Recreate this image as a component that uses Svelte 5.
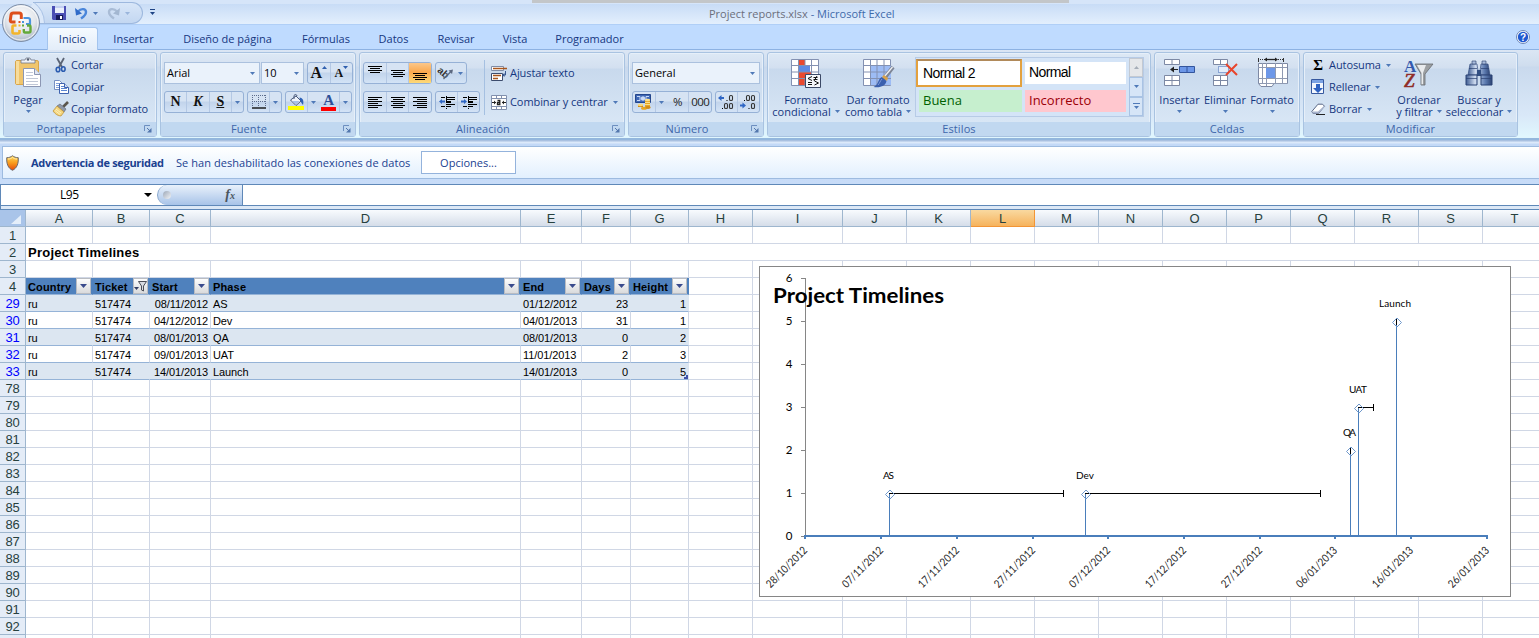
<script>
  const tabs = [
    ['Inicio', 51], ['Insertar', 71], ['Diseño de página', 117], ['Fórmulas', 80],
    ['Datos', 55], ['Revisar', 70], ['Vista', 48], ['Programador', 101]
  ];

  const columns = [
    ['A', 67], ['B', 57], ['C', 61], ['D', 310], ['E', 61], ['F', 49], ['G', 58], ['H', 64], ['I', 90],
    ['J', 64], ['K', 64], ['L', 64], ['M', 64], ['N', 64], ['O', 64], ['P', 64], ['Q', 64], ['R', 64],
    ['S', 64], ['T', 64]
  ];

  const fields = ['Country', 'Ticket', 'Start', 'Phase', 'End', 'Days', 'Height'];
  const records = {
    29: ['ru', '517474', '08/11/2012', 'AS', '01/12/2012', '23', '1'],
    30: ['ru', '517474', '04/12/2012', 'Dev', '04/01/2013', '31', '1'],
    31: ['ru', '517474', '08/01/2013', 'QA', '08/01/2013', '0', '2'],
    32: ['ru', '517474', '09/01/2013', 'UAT', '11/01/2013', '2', '3'],
    33: ['ru', '517474', '14/01/2013', 'Launch', '14/01/2013', '0', '5']
  };
  const rows = [1, 2, 3, 4, 29, 30, 31, 32, 33, ...Array.from({ length: 16 }, (_, i) => 78 + i)];
  const rightAligned = [2, 5, 6];

  const axisDates = ['28/10/2012', '07/11/2012', '17/11/2012', '27/11/2012', '07/12/2012',
    '17/12/2012', '27/12/2012', '06/01/2013', '16/01/2013', '26/01/2013'];
  const tickX = (i) => Math.round(46.4 + i * 75.72);
  const valueY = (v) => 270 - v * 43;
  const phases = [
    { name: 'AS', x: 130, v: 1, end: 304, w: 11, lx: 129.5 },
    { name: 'Dev', x: 326, v: 1, end: 561, w: 18, lx: 326 },
    { name: 'QA', x: 591, v: 2, end: 591, w: 13, lx: 590.5 },
    { name: 'UAT', x: 599, v: 3, end: 614, w: 18, lx: 599 },
    { name: 'Launch', x: 637, v: 5, end: 637, w: 32, lx: 636 }
  ];
</script>

{#snippet arrow()}
  <svg class="arrow" width="5" height="3" viewBox="0 0 5 3"><path d="M0 0h5L2.5 3z" fill="#4f79b8" /></svg>
{/snippet}

{#snippet lines(list, color = '#000')}
  {#each list as [x, y, w]}<rect {x} {y} width={w} height="1" fill={color} />{/each}
{/snippet}

{#snippet icon(name)}
  {#if name === 'save'}
    <svg width="14" height="14" viewBox="0 0 14 14"><path d="M0 0h14v14H1L0 13z" fill="#4a4eb4" /><path d="M3 0h9v7H3z" fill="#e9eefb" /><path d="M3 0h9v2H3z" fill="#c3cff2" /><path d="M4 9h7v5H4z" fill="#16195a" /><path d="M8 10h2v3H8z" fill="#fff" /></svg>
  {:else if name === 'undo'}
    <svg width="13" height="13" viewBox="0 0 13 13"><path d="M3 4.500C6 1 11 1.500 11 5c0 3-2 4.500-5 6.500" fill="none" stroke="#4a86da" stroke-width="2.400" /><path d="M0 1l1 7.500 6-2z" fill="#2f6ac8" /></svg>
  {:else if name === 'redo'}
    <svg width="13" height="13" viewBox="0 0 13 13"><path d="M10 4.500C7 1 2 1.500 2 5c0 3 2 4.500 5 6.500" fill="none" stroke="#a9bcd6" stroke-width="2.400" /><path d="M13 1l-1 7.500-6-2z" fill="#a3b7d1" /></svg>
  {:else if name === 'paste'}
    <svg width="28" height="32" viewBox="0 0 28 32"><rect x="1.500" y="3.500" width="23" height="24" rx="1.500" fill="#f0c56c" stroke="#d9a64b" /><path d="M2 4h3v23H2z" fill="#f7dc9c" /><path d="M7 6V3h4l1-2h4l1 2h4v3H7z" fill="#eef1f6" stroke="#717a8c" stroke-width=".8" /><circle cx="14" cy="2.500" r="1.200" fill="#555f72" /><path d="M9.500 11.500h11l6 6v12h-17z" fill="#fff" stroke="#8c97b3" /><path d="M20.500 11.500v6h6" fill="#dfe5f1" stroke="#8c97b3" /><path d="M12 15.500h7M12 18.500h7M12 21.500h12M12 24.500h12M12 27.500h12" stroke="#c0c7d6" /></svg>
  {:else if name === 'cut'}
    <svg width="12" height="15" viewBox="0 0 12 15"><path d="M2 0l5 9M9 0L4 9" stroke="#5b6475" stroke-width="1.800" /><ellipse cx="3" cy="11.500" rx="1.800" ry="2.300" fill="none" stroke="#2c5cb0" stroke-width="1.600" /><ellipse cx="8.300" cy="11" rx="1.800" ry="2.300" fill="none" stroke="#2c5cb0" stroke-width="1.600" /></svg>
  {:else if name === 'copy'}
    <svg width="15" height="14" viewBox="0 0 15 14"><path d="M.5.500h5l3 3v6h-8z" fill="#fff" stroke="#7690c4" /><path d="M2 3.500h3M2 5.500h4M2 7.500h4" stroke="#7fa0dc" /><path d="M5.500 3.500h5l4 4v6h-9z" fill="#fff" stroke="#3f62ae" /><path d="M7 6.500h3M7 8.500h6M7 10.500h6" stroke="#5c86d2" /><path d="M10.500 3.500v4h4" fill="#cfdcf4" stroke="#3f62ae" /></svg>
  {:else if name === 'brush'}
    <svg width="16" height="14" viewBox="0 0 16 14"><path d="M15 0l-5 5" stroke="#5a554c" stroke-width="2.600" /><path d="M7 2l6 5-2 3-7-6z" fill="#8f98a8" stroke="#5d6472" stroke-width=".6" /><path d="M4 4l7 6-3 4c-3 0-6-2-8-5z" fill="#f3d57e" stroke="#bb8b2a" stroke-width=".7" /><path d="M3 7l5 4M2 8.500l5 4" stroke="#fff4c8" stroke-width=".8" /></svg>
  {:else if name === 'border'}
    <svg width="14" height="14" viewBox="0 0 14 14"><path d="M0 .5h14M.5 0v12M13.500 0v12M6.500 0v12M0 6.500h14" stroke="#5c6c8c" stroke-dasharray="1 1" /><path d="M0 13h14" stroke="#111" stroke-width="1.400" /></svg>
  {:else if name === 'fill'}
    <svg width="16" height="16" viewBox="0 0 16 16"><path d="M2.500 6l5.500-4 5 5-5 4.500z" fill="#eef3fb" stroke="#49597a" /><path d="M4 7h8L8 10.500z" fill="#a8c0ea" /><path d="M6 5V1.500c1-1.500 3-1 3 .5" fill="none" stroke="#49597a" /><path d="M11.500 3.500c3.500.5 4.500 3 3.500 7.500-1-1-2-3-3-5z" fill="#2e62b8" /><path d="M0 12h16v4H0z" fill="#ff0" /></svg>
  {:else if name === 'wrap'}
    <svg width="16" height="15" viewBox="0 0 16 15"><path d="M.5.500h12v4H.5z" fill="#fff" stroke="#7f8ca6" /><path d="M2 2.500h14" stroke="#a8561d" stroke-width="1.500" /><path d="M.5 7.500h11v7H.5z" fill="#fff" stroke="#3c4c6d" /><path d="M2 9.500h8M2 12.500h5" stroke="#a8561d" stroke-width="1.500" /><path d="M14.500 5v4h-2" fill="none" stroke="#39588f" /><path d="M13.500 7v4L11 9z" fill="#39588f" /></svg>
  {:else if name === 'merge'}
    <svg width="16" height="15" viewBox="0 0 16 15"><path d="M.5.500h15v14H.5z" fill="#fff" stroke="#8190ae" /><path d="M0 3.500h16M0 11.500h16M5.500 0v3M10.500 0v3M5.500 12v3M10.500 12v3" stroke="#8190ae" /><path d="M1 7.500h4M11 7.500h4" stroke="#222" /><path d="M3 5.500L5 7.500 3 9.500zM13 5.500l-2 2 2 2z" fill="#222" /><path d="M6.500 5.500h2.300v4H6.500v-2h2.300" fill="none" stroke="#222" stroke-width="1.300" /></svg>
  {:else if name === 'orient'}
    <svg width="17" height="14" viewBox="0 0 17 14"><text x="1" y="8" transform="rotate(42 4 5)" font-family="Liberation Sans" font-size="10" font-weight="bold" fill="#333">ab</text><path d="M6.500 13L14 5.500" stroke="#5b6880" stroke-width="1.300" /><path d="M16 3.500l-4.500 1 3.500 3.500z" fill="#5b6880" /></svg>
  {:else if name === 'money'}
    <svg width="17" height="16" viewBox="0 0 17 16"><path d="M.5.500h15v8H.5z" fill="#3e67b5" stroke="#24468c" /><path d="M2 2.500h3v4H2M14 2.500h-3v4h3" fill="none" stroke="#c9daf7" /><circle cx="8" cy="4.500" r="2.200" fill="#c9daf7" /><path d="M10 6h5v7h-5z" fill="#e8a622" /><path d="M10 8.500h5M10 10.500h5" stroke="#fbe08d" /><ellipse cx="12.500" cy="6" rx="2.700" ry="1.300" fill="#fbe08d" /><path d="M3 11h5v2H3z" fill="#cf8a17" /><ellipse cx="5.500" cy="11" rx="2.700" ry="1.200" fill="#fbd978" /><ellipse cx="9" cy="14.300" rx="3" ry="1.500" fill="#e8a622" /><ellipse cx="13" cy="13.500" rx="2.700" ry="1.400" fill="#d18d18" /></svg>
  {:else if name === 'conditional'}
    <svg width="30" height="29" viewBox="0 0 30 29"><path d="M.5.500h27v26H.5z" fill="#fff" stroke="#8391b2" /><path d="M8 1h6v6H8zM8 13h12v7H8zM8 20h6v6H8z" fill="#e9492f" /><path d="M8 7h11v6H8z" fill="#5d8ae4" /><path d="M7.500 0v26M14 0v7M14 20v6M20.500 0v26M0 6.500h28M0 13h28M0 19.500h28" stroke="#8391b2" /><path d="M14.500 15.500h15v13h-15z" fill="#f5f7fb" stroke="#3b4966" /><path d="M21 17.500l-4 2 4 2M17 23.500h4M17 25.500h4M22.500 18.500h4M22.500 20.500h4M26 17l-3 5M23.500 22l4 2-4 2" fill="none" stroke="#111" /></svg>
  {:else if name === 'tableformat'}
    <svg width="31" height="29" viewBox="0 0 31 29"><path d="M.5.500h27v26H.5z" fill="#fff" stroke="#8391b2" /><path d="M8 7h20v19H8z" fill="#9dbcf5" /><path d="M7.500 0v26M14 0v26M21 0v26M0 6.500h28M0 13h28M0 19.500h28" stroke="#8391b2" /><path d="M30 8L20 21" stroke="#7d8596" stroke-width="4" /><path d="M29.500 8L21 18" stroke="#eef0f4" stroke-width="1.300" /><path d="M21 16l4 3-1 3-5-4z" fill="#d9a24a" /><path d="M18.500 18l5 4c-1 5-6 7-13 6 5-2 4-7 8-10z" fill="#3a5fae" /><path d="M19 20c-2 2-2 4-4 6" fill="none" stroke="#7d9bdc" /></svg>
  {:else if name === 'insert'}
    <svg width="31" height="28" viewBox="0 0 31 28"><path d="M.5.500h15v5H.5zM8 .5v5M.5 16.500h15v10H.5zM8 16.500v10M.5 21.500h15" fill="#fff" stroke="#7d89a4" /><path d="M15.500 7.500h15v6h-15z" fill="#6c97e8" stroke="#33559d" /><path d="M23 8v5" stroke="#33559d" /><path d="M8 10.500h6" stroke="#222" /><path d="M6 10.500l4-3v6z" fill="#222" /></svg>
  {:else if name === 'delete'}
    <svg width="25" height="28" viewBox="0 0 25 28"><path d="M.5.500h14v5H.5zM7.500 .5v5M.5 16.500h14v10H.5zM7.500 16.500v10M.5 21.500h14" fill="#fff" stroke="#7d89a4" /><path d="M5.500 7.500h10v6h-10z" fill="#e4edfa" stroke="#3c67b5" stroke-dasharray="1 1" /><path d="M13 5l11 11M24 5L13 16" stroke="#e8452c" stroke-width="2" /></svg>
  {:else if name === 'format'}
    <svg width="31" height="30" viewBox="0 0 31 30"><path d="M1 1.500h26" stroke="#333" stroke-dasharray="1 1" /><path d="M1.500 0v4M26.500 0v4" stroke="#333" /><path d="M9 1.500h10" stroke="#222" stroke-width="1.300" /><path d="M7 1.500l3-2v4zM21 1.500l-3-2v4z" fill="#222" /><path d="M1.500 5.500h29v20H17l-2 3H4l-2.500-3z" fill="#fff" stroke="#7d89a4" /><path d="M1 9.500h29M1 20.500h29M1 25.500h29M9.500 5v23M18.500 5v20M25.500 5v20M5.500 5v20" stroke="#8f9ab2" /><path d="M9 10h9v10H9z" fill="#6c97e8" /></svg>
  {:else if name === 'filldown'}
    <svg width="14" height="16" viewBox="0 0 14 16"><path d="M.5.500h12v14H.5z" fill="#f2f6fd" stroke="#36589f" /><path d="M1 1h11v3H1z" fill="#7ba2e3" /><path d="M5 5h4v4h3l-5 5-5-5h3z" fill="#2f62c1" /></svg>
  {:else if name === 'erase'}
    <svg width="15" height="12" viewBox="0 0 15 12"><path d="M.8 8.500L7 1.200h4.500l2 2L7.500 10.500H2z" fill="#fff" stroke="#5c6987" /><path d="M1 8.500h6l6.500-6v1.500L7.500 10.500H2z" fill="#a9b5ce" /><path d="M5 11.500h9" stroke="#222" /></svg>
  {:else if name === 'sort'}
    <svg width="30" height="29" viewBox="0 0 30 29"><text x="0" y="13" font-family="Liberation Serif" font-size="17" font-weight="bold" fill="#3359ad">A</text><text x="0" y="28" font-family="Liberation Serif" font-size="19" font-style="italic" fill="#8f2c27" stroke="#8f2c27" stroke-width=".6">Z</text><path d="M11 5h18l-8 10v11h-4V15z" fill="#9c9fa2" stroke="#66696f" stroke-width=".8" /><path d="M13 6h9l-3 8v11l-1.500.5V14z" fill="#e9ebed" /></svg>
  {:else if name === 'find'}
    <svg width="28" height="25" viewBox="0 0 28 25"><defs><linearGradient id="bino"><stop offset="0" stop-color="#3e5c92" /><stop offset=".35" stop-color="#cfdcf0" /><stop offset=".75" stop-color="#5d7bb0" /><stop offset="1" stop-color="#2c4373" /></linearGradient></defs><path d="M5 3h7l1 7-1 4H3zM16 3h7l2 11h-9l-1-4z" fill="url(#bino)" stroke="#3a5283" stroke-width=".7" /><path d="M7 0h4v3H7zM17 0h4v3h-4z" fill="#a9bcdc" stroke="#283d69" stroke-width=".6" /><path d="M12 9h4v6h-4z" fill="#324f82" /><path d="M1 14h11v10H1zM16 14h11v10H16z" fill="url(#bino)" stroke="#2b4274" /><path d="M1 17.500h11M16 17.500h11M4 7.500h8M16 7.500h8" stroke="#2a4070" stroke-opacity=".7" /></svg>
  {:else if name === 'shield'}
    <svg width="13" height="16" viewBox="0 0 13 16"><defs><linearGradient id="sh" x1="0" y1="0" x2="0" y2="1"><stop offset="0" stop-color="#ffd95a" /><stop offset=".5" stop-color="#f99b1d" /><stop offset="1" stop-color="#e4490e" /></linearGradient></defs><path d="M6.500.7C8 2 10 2.700 12.300 2.700 12.500 9 11 13 6.500 15.300 2 13 .5 9 .7 2.700 3 2.700 5 2 6.500.7z" fill="url(#sh)" stroke="#6b6a70" /><path d="M2 4c2 0 3-.5 4.500-1.500C8 3.500 9 4 11 4" stroke="#ffefb0" fill="none" /></svg>
  {:else if name === 'help'}
    <svg width="14" height="14" viewBox="0 0 14 14"><circle cx="7" cy="7" r="6.500" fill="#fff" stroke="#6c86b7" /><circle cx="7" cy="7" r="5.200" fill="#1f58d0" /><text x="7" y="10.500" text-anchor="middle" font-family="Liberation Sans" font-weight="bold" font-size="10" fill="#fff">?</text></svg>
  {:else if name === 'topalign'}
    <svg width="14" height="14" viewBox="0 0 14 14">{@render lines([[0, 0, 14], [2, 2, 10], [0, 4, 14], [2, 6, 10]])}</svg>
  {:else if name === 'midalign'}
    <svg width="14" height="14" viewBox="0 0 14 14">{@render lines([[0, 4, 14], [2, 6, 10], [0, 8, 14], [2, 10, 10]])}</svg>
  {:else if name === 'botalign'}
    <svg width="14" height="14" viewBox="0 0 14 14">{@render lines([[0, 7, 14], [2, 9, 10], [0, 11, 14], [2, 13, 10]])}</svg>
  {:else if name === 'left'}
    <svg width="14" height="11" viewBox="0 0 14 11">{@render lines([[0, 0, 14], [0, 2, 10], [0, 4, 14], [0, 6, 10], [0, 8, 14], [0, 10, 10]])}</svg>
  {:else if name === 'center'}
    <svg width="14" height="11" viewBox="0 0 14 11">{@render lines([[0, 0, 14], [2, 2, 10], [0, 4, 14], [2, 6, 10], [0, 8, 14], [2, 10, 10]])}</svg>
  {:else if name === 'right'}
    <svg width="14" height="11" viewBox="0 0 14 11">{@render lines([[0, 0, 14], [4, 2, 10], [0, 4, 14], [4, 6, 10], [0, 8, 14], [4, 10, 10]])}</svg>
  {:else if name === 'outdent' || name === 'indent'}
    <svg width="16" height="13" viewBox="0 0 16 13">
      {@render lines([[2, 1, 4], [7, 1, 9], [7, 3, 9], [7, 5, 5], [7, 6, 5], [7, 8, 9], [2, 10, 4], [7, 10, 5]])}
      <path d="M7.500 0v13" stroke="#000" stroke-dasharray="1 1" />
      {#if name === 'outdent'}<path d="M0 5.500L3 3v1.500h3v2H3V8z" fill="#2f66c4" />{:else}<path d="M6 5.500L3 3v1.500H0v2h3V8z" fill="#2f66c4" />{/if}
    </svg>
  {:else if name === 'moredec' || name === 'lessdec'}
    <svg width="17" height="15" viewBox="0 0 17 15">
      {#if name === 'moredec'}
        <path d="M0 3L3.500 0v2H6v2H3.500v2z" fill="#2f66c4" />
        <g fill="none" stroke="#333" stroke-width="1.100"><rect x="11.500" y=".5" width="3" height="5" rx="1.300" /><rect x="6.500" y="8.500" width="3" height="5" rx="1.300" /><rect x="11.500" y="8.500" width="3" height="5" rx="1.300" /></g><path d="M8.500 5h1v1h-1zM4 13h1v1H4z" />
      {:else}
        <path d="M6 10.500L2.500 7.500v2H0v2h2.500v2z" fill="#2f66c4" />
        <g fill="none" stroke="#333" stroke-width="1.100"><rect x="6.500" y=".5" width="3" height="5" rx="1.300" /><rect x="11.500" y=".5" width="3" height="5" rx="1.300" /><rect x="11.500" y="8.500" width="3" height="5" rx="1.300" /></g><path d="M4 5h1v1H4zM8.500 13h1v1h-1z" />
      {/if}
    </svg>
  {/if}
{/snippet}

{#snippet group(title, width, launcher, body)}
  <section class="group" style:width="{width}px">
    <div class="body">{@render body()}</div>
    <footer>
      <span>{title}</span>
      {#if launcher}
        <svg width="8" height="8" viewBox="0 0 8 8"><path d="M.5 6V.5H6" fill="none" stroke="#6d8fc0" /><path d="M3 3l3 3" stroke="#5377ad" /><path d="M7.500 3v4.500H3z" fill="#5377ad" /></svg>
      {/if}
    </footer>
  </section>
{/snippet}

{#snippet big(name, width, first, second)}
  <div class="big" style:width="{width}px">
    <div class="pic">{@render icon(name)}</div>
    <span>{first}</span>
    <span class="second">{second}{@render arrow()}</span>
  </div>
{/snippet}

{#snippet clipboard()}
  {@render big('paste', 48, 'Pegar', '')}
  <div class="stack">
    <div><i>{@render icon('cut')}</i>Cortar</div>
    <div><i>{@render icon('copy')}</i>Copiar</div>
    <div><i>{@render icon('brush')}</i>Copiar formato</div>
  </div>
{/snippet}

{#snippet font()}
  <div class="controls">
    <div class="line tight">
      <div class="combo" style:width="96px">Arial{@render arrow()}</div>
      <div class="combo" style:width="43px">10{@render arrow()}</div>
      <div class="btns aa" style:width="46px">
        <b class="serif grow">A<svg width="5" height="3" viewBox="0 0 5 3"><path d="M0 3h5L2.500 0z" fill="#2f5fae" /></svg></b>
        <b class="serif shrink">A<svg width="5" height="3" viewBox="0 0 5 3"><path d="M0 0h5L2.500 3z" fill="#2f5fae" /></svg></b>
      </div>
    </div>
    <div class="line">
      <div class="btns" style:width="80px">
        <b class="serif">N</b><b class="serif it">K</b><b class="serif un">S</b><em>{@render arrow()}</em>
      </div>
      <div class="btns" style:width="35px"><b>{@render icon('border')}</b><em>{@render arrow()}</em></div>
      <div class="btns" style:width="67px">
        <b>{@render icon('fill')}</b><em>{@render arrow()}</em>
        <b class="serif fontcolor"><span>A</span></b><em>{@render arrow()}</em>
      </div>
    </div>
  </div>
{/snippet}

{#snippet alignment()}
  <div class="controls">
    <div class="line">
      <div class="btns" style:width="69px">
        <b>{@render icon('topalign')}</b><b>{@render icon('midalign')}</b><b class="on">{@render icon('botalign')}</b>
      </div>
      <div class="btns" style:width="32px"><b class="plain">{@render icon('orient')}</b><em>{@render arrow()}</em></div>
    </div>
    <div class="line">
      <div class="btns" style:width="69px">
        <b>{@render icon('left')}</b><b>{@render icon('center')}</b><b>{@render icon('right')}</b>
      </div>
      <div class="btns" style:width="45px"><b>{@render icon('outdent')}</b><b>{@render icon('indent')}</b></div>
    </div>
  </div>
  <div class="wraps">
    <div><i>{@render icon('wrap')}</i>Ajustar texto</div>
    <div><i>{@render icon('merge')}</i>Combinar y centrar{@render arrow()}</div>
  </div>
{/snippet}

{#snippet number()}
  <div class="controls">
    <div class="line"><div class="combo" style:width="128px">General{@render arrow()}</div></div>
    <div class="line">
      <div class="btns" style:width="80px">
        <b>{@render icon('money')}</b><em>{@render arrow()}</em><b class="txt">%</b><b class="txt">000</b>
      </div>
      <div class="btns" style:width="45px"><b>{@render icon('moredec')}</b><b>{@render icon('lessdec')}</b></div>
    </div>
  </div>
{/snippet}

{#snippet styles()}
  <div class="inset"></div>
  {@render big('conditional', 72, 'Formato', 'condicional')}
  {@render big('tableformat', 72, 'Dar formato', 'como tabla')}
  <div class="gallery">
    <div class="swatches">
      <span class="sel">Normal 2</span><span class="arial">Normal</span>
      <span class="good">Buena</span><span class="bad">Incorrecto</span>
    </div>
    <div class="scroll">
      <i class="off"><svg width="5" height="3" viewBox="0 0 5 3"><path d="M0 3h5L2.500 0z" fill="#a5adb8" /></svg></i>
      <i>{@render arrow()}</i>
      <i><svg width="7" height="6" viewBox="0 0 7 6"><path d="M0 .5h7" stroke="#4f79b8" /><path d="M1 3h5L3.500 6z" fill="#4f79b8" /></svg></i>
    </div>
  </div>
{/snippet}

{#snippet cells()}
  {@render big('insert', 49, 'Insertar', '')}
  {@render big('delete', 42, 'Eliminar', '')}
  {@render big('format', 52, 'Formato', '')}
{/snippet}

{#snippet editing()}
  <div class="stack edit">
    <div><i class="sigma">Σ</i>Autosuma{@render arrow()}</div>
    <div><i>{@render icon('filldown')}</i>Rellenar{@render arrow()}</div>
    <div><i>{@render icon('erase')}</i>Borrar{@render arrow()}</div>
  </div>
  {@render big('sort', 52, 'Ordenar', 'y filtrar')}
  {@render big('find', 68, 'Buscar y', 'seleccionar')}
{/snippet}

<div class="app">
  <header class="titlebar">
    <div class="strip"></div>
    <div class="qat">
      {@render icon('save')}{@render icon('undo')}{@render arrow()}{@render icon('redo')}<span class="dim">{@render arrow()}</span>
    </div>
    <svg class="custom" width="7" height="7" viewBox="0 0 7 7"><path d="M1 .5h5" stroke="#1f4485" /><path d="M1 3h5L3.500 6z" fill="#1f4485" /></svg>
    <h1>Project reports.xlsx <span>- Microsoft Excel</span></h1>
  </header>

  <div class="orb">
    <svg width="46" height="40" viewBox="0 0 46 40">
      <defs><radialGradient id="orb" cx=".5" cy=".35" r=".65"><stop offset="0" stop-color="#fff" /><stop offset=".6" stop-color="#e3e6eb" /><stop offset="1" stop-color="#aab6c7" /></radialGradient></defs>
      <path d="M32 0Q43 7 44 20H20z" fill="#dbe8f9" />
      <path d="M33-.5Q43 7 43.500 20" fill="none" stroke="#a9c2e6" />
      <circle cx="20" cy="20" r="18.500" fill="url(#orb)" stroke="#7e8fa8" />
      <circle cx="20" cy="20" r="17" fill="none" stroke="#fff" stroke-opacity=".8" />
      <g fill="none">
        <path d="M14.500 19H11q-2 0-1.700-2l.7-5q.3-2 2.300-2h6q2 0 2 2v4" stroke="#dd4f1b" stroke-width="3" />
        <path d="M22.500 15h4.500q2 0 2 2v4h-4" stroke="#4a94de" stroke-width="2.200" />
        <path d="M15.500 22.500h-3q-1 0-1 1.500v5q0 1.500 1.500 1.500h4q1.500 0 1.500-1.500v-2" stroke="#f3b52b" stroke-width="2.600" />
        <path d="M26 22.500h2.500q1 0 1 1.500v4q0 1.500-1.500 1.500h-4q-1.200 0-1.200-1.500v-2" stroke="#63a93a" stroke-width="2.400" />
      </g>
      <path d="M17.500 18h2v2h-2z" fill="#dd4f1b" /><path d="M21 18h2v2h-2z" fill="#4a94de" /><path d="M17.500 21.500h2v2h-2z" fill="#f3b52b" /><path d="M21 21.500h2v2h-2z" fill="#63a93a" />
    </svg>
  </div>

  <nav>
    {#each tabs as [name, width], i}
      <span class:active={i === 0} style:width="{width}px">{name}</span>
    {/each}
    <div class="help">{@render icon('help')}</div>
  </nav>

  <div class="ribbon">
    {@render group('Portapapeles', 154, true, clipboard)}
    {@render group('Fuente', 196, true, font)}
    {@render group('Alineación', 266, true, alignment)}
    {@render group('Número', 136, true, number)}
    {@render group('Estilos', 384, false, styles)}
    {@render group('Celdas', 146, false, cells)}
    {@render group('Modificar', 215, false, editing)}
  </div>

  <div class="message">
    <div class="notice">
      {@render icon('shield')}
      <strong>Advertencia de seguridad</strong>
      <span>Se han deshabilitado las conexiones de datos</span>
      <button>Opciones...</button>
    </div>
  </div>

  <div class="formula">
    <div class="namebox"><span>L95</span><svg width="8" height="4" viewBox="0 0 8 4"><path d="M0 0h8L4 4z" /></svg></div>
    <div class="fxzone"><div class="fxpill"><i></i><span>f<small>x</small></span></div></div>
    <div class="input"></div>
  </div>

  <main>
    <div class="row head">
      <div class="corner"><svg width="10" height="9" viewBox="0 0 10 9"><path d="M10 0v9H0z" fill="#e4eefa" /></svg></div>
      {#each columns as [name, width]}
        <div class="colhead" class:current={name === 'L'} style:width="{width}px">{name}</div>
      {/each}
    </div>
    {#each rows as n}
      <div class="row" class:fields={n === 4} class:record={records[n]} class:band={records[n] && n % 2}>
        <div class="rowhead" class:filtered={records[n]}>{n}</div>
        {#if n === 2}
          <div class="cell title">Project Timelines</div>
        {:else}
          {#each columns as [, width], c}
            <div class="cell" class:tbl={c < 7} class:num={records[n] && rightAligned.includes(c)} style:width="{width}px">
              {#if n === 4 && c < 7}
                <span>{fields[c]}</span>
                <i class="drop">
                  {#if c === 1}
                    <svg width="13" height="11" viewBox="0 0 13 11"><path d="M0 6h5L2.500 9z" fill="#333e63" /><path d="M4.500.500h8L9.500 5v5l-2-1V5z" fill="#d8dbe1" stroke="#4c4f58" /></svg>
                  {:else}
                    <svg width="7" height="4" viewBox="0 0 7 4"><path d="M0 0h7L3.500 4z" fill="#3a4b8c" /></svg>
                  {/if}
                </i>
              {:else if records[n] && c < 7}
                {records[n][c]}
              {/if}
              {#if n === 33 && c === 6}<i class="handle"></i>{/if}
            </div>
          {/each}
        {/if}
      </div>
    {/each}

    <svg class="chart" width="752" height="331" viewBox="0 0 752 331">
      <rect x=".5" y=".5" width="751" height="330" fill="#fff" stroke="#868686" />
      <g shape-rendering="crispEdges">
        <path d="M46.500 12v258" stroke="#868686" />
        {#each [1, 2, 3, 4, 5, 6] as v}<path d="M42 {valueY(v) + 0.5}h4.500" stroke="#868686" />{/each}
        <path d="M42 270.500h5" stroke="#868686" />
      </g>
      {#each [0, 1, 2, 3, 4, 5, 6] as v}
        <text x="30" y={valueY(v) + 4} text-anchor="middle" font-size="11.500">{v}</text>
      {/each}
      <g shape-rendering="crispEdges">
        {#each phases as p}<path d="M{p.x + 0.5} {valueY(p.v)}V270" stroke="#4a7ebb" />{/each}
        <path d="M46 270h683" stroke="#4a7ebb" stroke-width="2" />
        {#each axisDates as _, i}<path d="M{tickX(i)} 269v4" stroke="#4a7ebb" stroke-width="2" />{/each}
      </g>
      {#each phases as p}
        <g shape-rendering="crispEdges">
          <path d="M{p.x} {valueY(p.v) + 0.5}H{p.end}" stroke="#000" />
          <path d="M{p.end + 0.5} {valueY(p.v) - 3}v7" stroke="#000" />
        </g>
        <path d="M{p.x + 1} {valueY(p.v) - 3}l4.500 4.500l-4.500 4.500l-4.500 -4.500z" fill="none" stroke="#6f98cb" />
        <text x={p.lx} y={valueY(p.v) - 14} text-anchor="middle" font-size="10" textLength={p.w}>{p.name}</text>
      {/each}
      {#each axisDates as d, i}
        <text class="date" transform="translate({tickX(i) + 3} 285) rotate(-45)" text-anchor="end" font-size="11" textLength="53" lengthAdjust="spacingAndGlyphs">{d}</text>
      {/each}
      <text x="14" y="37" font-size="20" font-weight="bold" textLength="171" lengthAdjust="spacingAndGlyphs">Project Timelines</text>
    </svg>
  </main>
</div>

<style>
  :global(body) { overflow: hidden; }
  .app { position: relative; width: 1539px; height: 638px; overflow: hidden; background: #bfd8fb; font: 11px/14px 'Open Sans', 'Noto Sans', sans-serif; color: #15377f; white-space: nowrap; }
  .app * { box-sizing: border-box; }
  svg { display: block; flex: none; overflow: visible; }
  i, em { font-style: normal; }

  .titlebar { position: relative; display: flex; align-items: center; height: 25px; background: linear-gradient(#d6e5f9 0 4px, #c8dcf6 4px, #e3effd 24px); border-bottom: 1px solid #b0cff7; }
  .strip { position: absolute; left: 532px; top: 0; width: 537px; height: 3px; background: #c3c6c9; }
  .qat { display: flex; align-items: center; gap: 9px; width: 110px; height: 22px; margin: 2px 0 0 33px; padding: 0 0 0 19px; border: 1px solid #9db8de; border-left: 0; border-radius: 0 11px 11px 0; background: linear-gradient(#d8e6f8, #c3d7f1); }
  .qat .arrow { margin-left: -4px; }
  .dim { opacity: .4; }
  .custom { margin-left: 6px; }
  h1 { position: absolute; left: 709px; top: 7px; margin: 0; font: inherit; color: #6b6f7c; }
  h1 span { color: #3e6aaa; }
  .orb { position: absolute; left: 1px; top: 3px; z-index: 2; }

  nav { display: flex; height: 25px; padding-left: 47px; background: #bfdbff; border-bottom: 1px solid #8db2e3; }
  nav > span { display: block; height: 25px; padding-top: 7px; text-align: center; }
  nav > .active { height: 23px; margin-top: 2px; padding-top: 4px; background: linear-gradient(#f5faff, #e3edf9); border: 1px solid #a3c4ee; border-bottom: 0; border-radius: 3px 3px 0 0; }
  .help { margin: 5px 9px 0 auto; }

  .ribbon { display: flex; gap: 3px; height: 90px; padding: 2px 0 0 3px; background: linear-gradient(#dbe6f4 0, #cfddee 16px, #c9d9ed 17px, #d9e8f8 65px, #e0f6fe 86px, #e0f6fe); border-bottom: 2px solid #93b7dd; }
  .group { display: flex; flex-direction: column; height: 85px; border: 1px solid #a9c3e1; border-radius: 3px; box-shadow: inset 0 0 0 1px #e6eff9; background: linear-gradient(#dde8f5 0, #d3e0f0 15px, #c8d9ed 16px, #d8e6f5 69px); }
  .body { display: flex; height: 69px; }
  footer { position: relative; display: flex; align-items: center; justify-content: center; height: 14px; background: #c1d8f0; color: #3e66aa; letter-spacing: .1px; }
  footer span { margin-right: 18px; }
  footer svg { position: absolute; right: 4px; top: 3px; }
  .group:nth-child(n+5) footer span { margin-right: 0; }

  .big { display: flex; flex-direction: column; align-items: center; flex: none; height: 69px; }
  .pic { display: flex; align-items: center; justify-content: center; height: 39px; padding-top: 1px; }
  .big span { height: 13px; line-height: 15px; }
  .second { display: flex; align-items: center; gap: 4px; }
  .inset { width: 2px; }

  .stack { display: flex; flex-direction: column; padding-top: 1px; letter-spacing: -.08px; }
  .stack div { display: flex; align-items: center; height: 22px; }
  .stack i { display: flex; justify-content: center; width: 18px; margin-right: 1px; }
  .stack .arrow { margin-left: 5px; }
  .edit { width: 89px; padding-left: 5px; }
  .edit i { margin-right: 2px; }
  .sigma { font: bold 15px 'Liberation Serif', serif; color: #000; }

  .controls { display: flex; flex-direction: column; gap: 7px; padding: 9px 3px 0; flex: none; }
  .line { display: flex; gap: 3px; }
  .tight { gap: 1px; }
  .tight .aa { margin-left: 2px; }
  .combo { display: flex; align-items: center; justify-content: space-between; height: 22px; padding: 0 4px 0 2px; background: #eaf2fb; border: 1px solid #abc1de; color: #000; }
  .btns { display: flex; height: 22px; border: 1px solid #96b1d6; border-radius: 3px; background: linear-gradient(#d6e3f3 0 9px, #c2d4eb 10px, #d3e3f6); }
  .btns b { display: flex; align-items: center; justify-content: center; flex: 1 1 0; min-width: 0; border-right: 1px solid #b4c8e4; font-weight: normal; color: #1c1c1c; }
  .btns b:last-child, .btns em:last-child, .btns .plain { border-right: 0; }
  .btns em { display: flex; align-items: center; justify-content: center; width: 11px; flex: none; }
  .btns .serif { font: bold 14px/20px 'Liberation Serif', serif; color: #111; }
  .btns .it { font-style: italic; }
  .btns .un { text-decoration: underline; }
  .btns .grow { font-size: 16px; }
  .btns .shrink { font-size: 12px; }
  .grow svg, .shrink svg { align-self: flex-start; margin-top: 3px; }
  .btns .on { background: linear-gradient(#fbc78a, #fba94e 45%, #fdda78); }
  .btns .fontcolor { color: #2d4f97; font-size: 15px; }
  .fontcolor span { border-bottom: 4px solid #f00; padding: 0 2px; line-height: 12px; height: 17px; }
  .btns .txt { color: #222; letter-spacing: -.6px; font-size: 11.5px; }

  .wraps { display: flex; flex-direction: column; gap: 7px; margin: 7px 0 0 1px; height: 55px; padding: 2px 0 0 6px; border-left: 1px solid #a5c0e1; letter-spacing: -.08px; }
  .wraps div { display: flex; align-items: center; height: 22px; }
  .wraps i { margin-right: 3px; }
  .wraps .arrow { margin-left: 5px; }

  .gallery { display: flex; width: 229px; height: 60px; margin: 4px 0 0 1px; border: 1px solid #b7cbe6; background: #d4e4f7; }
  .swatches { display: grid; grid-template-columns: 106px 101px; grid-template-rows: 28px 22px; gap: 3px; padding: 1px 0 0; font: 13px/20px 'Open Sans', sans-serif; }
  .swatches span { padding-left: 4px; height: 22px; background: #fff; color: #000; }
  .swatches .sel { height: 28px; padding: 2px 0 0 5px; border: 2px solid #e3a13f; border-top-color: #b18a5a; font: 14px/20px 'Liberation Sans', sans-serif; letter-spacing: -.6px; }
  .swatches .arial { margin-top: 3px; font: 14px/20px 'Liberation Sans', sans-serif; letter-spacing: -.6px; }
  .swatches .good { margin-left: 3px; background: #c6efce; color: #006100; }
  .swatches .bad { background: #ffc7ce; color: #9c0006; }
  .scroll { display: flex; flex-direction: column; width: 14px; margin-left: 3px; }
  .scroll i { display: flex; align-items: center; justify-content: center; flex: 1; border: 1px solid #a9c3e4; background: #d6e5f7; }
  .scroll .off { background: #e5e7ea; border-color: #c3c9d2; }

  .message { height: 44px; padding: 6px 0 0 2px; background: linear-gradient(#a9c0e0 0 1px, #dce9fa 2px 3px, #c3d9f7 4px, #c8dcf8); }
  .notice { display: flex; align-items: center; height: 33px; padding-left: 3px; border: 1px solid #9dbbe0; border-right: 0; background: linear-gradient(#fff, #e2f0fe); color: #1a4190; }
  .notice strong { width: 133px; margin: 0 12px; letter-spacing: -.3px; }
  .notice span { width: 236px; margin-right: 9px; letter-spacing: .05px; }
  button { width: 95px; height: 23px; padding: 0; border: 1px solid #94b3dc; background: #fff; font: inherit; color: inherit; }

  .formula { display: flex; height: 26px; border-top: 1px solid #5f88b8; border-left: 1px solid #5f88b8; border-bottom: 1px solid #5f88b8; background: linear-gradient(transparent 20px, #5f88b8 20px 21px, #dce8f6 21px), #fff; }
  .namebox { display: flex; align-items: center; width: 155px; height: 20px; padding-left: 59px; color: #000; font-size: 12px; letter-spacing: -.5px; }
  .namebox svg { margin-left: auto; margin-right: 4px; }
  .fxzone { width: 87px; height: 20px; border-right: 1px solid #5f88b8; background: #fff; }
  .fxpill { display: flex; align-items: center; justify-content: space-between; height: 20px; margin-left: 1px; padding: 0 7px 0 5px; border-left: 1px solid #86a5cc; border-radius: 10px 0 0 10px; background: linear-gradient(#e9f1fb, #a7c3e8); }
  .fxpill i { width: 8px; height: 8px; border-radius: 4px; background: linear-gradient(135deg, #9da8b8, #f2f4f7); }
  .fxpill span { font: italic bold 14px 'Liberation Serif', serif; color: #4b5560; }
  .fxpill small { font-size: 10px; }
  .input { flex: 1; height: 20px; }

  main { position: relative; height: 429px; background: #fff; overflow: hidden; font-family: 'Liberation Sans', Arial, sans-serif; color: #000; }
  .row { display: flex; width: 1600px; height: 17px; }
  .row > div { flex: none; }
  .head { font-size: 13px; line-height: 17px; color: #27413e; }
  .corner { display: flex; align-items: flex-end; justify-content: flex-end; width: 26px; padding: 0 4px 2px 0; background: #a9c4e9; border-right: 1px solid #9eb6ce; border-bottom: 1px solid #9eb6ce; }
  .colhead { text-align: center; border-right: 1px solid #9eb6ce; border-bottom: 1px solid #9eb6ce; background: linear-gradient(#f8fbfe, #d5dde9); }
  .current { background: linear-gradient(#f9d9a0, #f6b35d); border-color: #f29536; }
  .rowhead { width: 26px; line-height: 17px; text-align: center; font-size: 13px; letter-spacing: -.3px; color: #27413e; background: #e4ecf7; border-right: 1px solid #9eb6ce; border-bottom: 1px solid #9eb6ce; }
  .filtered { color: #00f; }
  .cell { display: flex; position: relative; border-right: 1px solid #d0d7e5; border-bottom: 1px solid #d0d7e5; padding-left: 2px; font-size: 11px; line-height: 18px; letter-spacing: -.1px; }
  .title { width: 1574px; font-size: 13px; font-weight: bold; line-height: 17px; letter-spacing: .24px; }
  .num { justify-content: flex-end; padding: 0 2px 0 0; }
  .record .tbl { border-bottom-color: #95b3d7; }
  .band .tbl { background: #dce6f1; border-right-color: #dce6f1; }
  .fields .tbl { justify-content: space-between; background: #4f81bd; border-color: #4f81bd; border-bottom-color: #95b3d7; font-weight: bold; letter-spacing: .15px; padding-right: 1px; }
  .drop { display: flex; align-items: center; justify-content: center; flex: none; width: 15px; height: 16px; border: 1px solid #b9bcc2; background: linear-gradient(#fdfdfd, #d9dadc); }
  .handle { position: absolute; right: 0; bottom: 0; width: 4px; height: 4px; background: #3f51a8; clip-path: polygon(50% 0, 100% 0, 100% 100%, 0 100%, 0 50%, 50% 50%); }

  .chart { position: absolute; left: 759px; top: 56px; font-family: Lato, 'Open Sans', sans-serif; fill: #000; }
  .date { fill: #222; }
</style>
